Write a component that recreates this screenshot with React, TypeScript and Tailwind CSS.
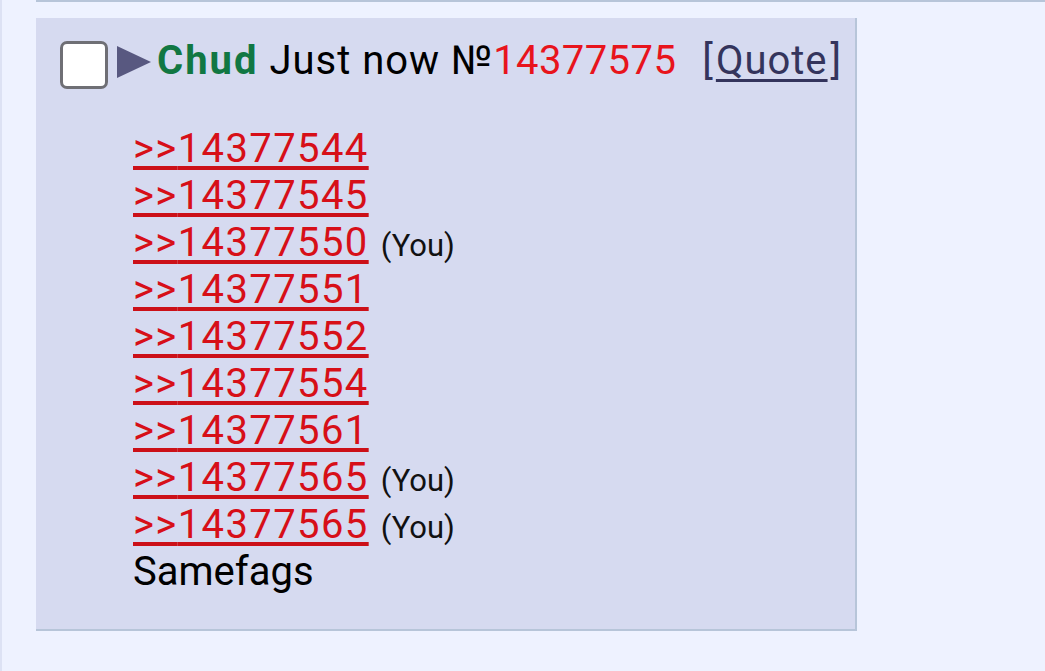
const QUOTES: { id: string; you?: boolean }[] = [
  { id: "14377544" },
  { id: "14377545" },
  { id: "14377550", you: true },
  { id: "14377551" },
  { id: "14377552" },
  { id: "14377554" },
  { id: "14377561" },
  { id: "14377565", you: true },
  { id: "14377565", you: true },
];

export default function App() {
  return (
    <div className="w-[1045px] h-[671px] overflow-hidden bg-[#eef2ff] border-l-2 border-[#dde2f4] font-['Roboto',sans-serif]">
      {/* previous post edge */}
      <div className="ml-[34px] h-[2px] bg-[#b7c5d9]" />

      <div className="ml-[34px] mt-[16px] w-[821px] h-[613px] bg-[#d6daf0] border-r-2 border-b-2 border-[#b7c5d9]">
        {/* header */}
        <div className="flex items-center pt-[23px] pl-[24px]">
          <div className="w-[48px] h-[48px] rounded-[7px] bg-white border-[3px] border-[#6f6f75] shrink-0" />
          <svg width="34" height="32" viewBox="0 0 34 32" className="ml-[9px] mt-[-6px] shrink-0">
            <polygon points="0,0 34,16 0,32" fill="#585880" />
          </svg>
          <div className="ml-[6px] mt-[-8px] text-[40px] leading-[48px] whitespace-nowrap text-black">
            <span className="font-bold text-[#117743] tracking-[2px]">Chud</span>
            <span className="tracking-[1px]"> Just now №</span>
            <span className="text-[#e8141c] tracking-[0.4px]">14377575</span>
            <span className="ml-[26px] text-[#34345c]">
              [<span className="mx-[3px] tracking-[1px] underline decoration-[3px] underline-offset-[5px]">Quote</span>]
            </span>
          </div>
        </div>

        {/* body */}
        <div className="mt-[36px] pl-[97px] text-[40px] leading-[47px] text-black">
          {QUOTES.map((q, i) => (
            <div key={i} className="h-[47px] whitespace-nowrap">
              <a className="text-[#d70f18] decoration-[#cc1018] tracking-[1.4px] underline decoration-[4px] underline-offset-[4px]">
                &gt;&gt;{q.id}
              </a>
              {q.you && (
                <span className="ml-[12px] text-[31px] leading-[47px] text-[#111]">(You)</span>
              )}
            </div>
          ))}
          <div className="h-[47px]">Samefags</div>
        </div>
      </div>
    </div>
  );
}
